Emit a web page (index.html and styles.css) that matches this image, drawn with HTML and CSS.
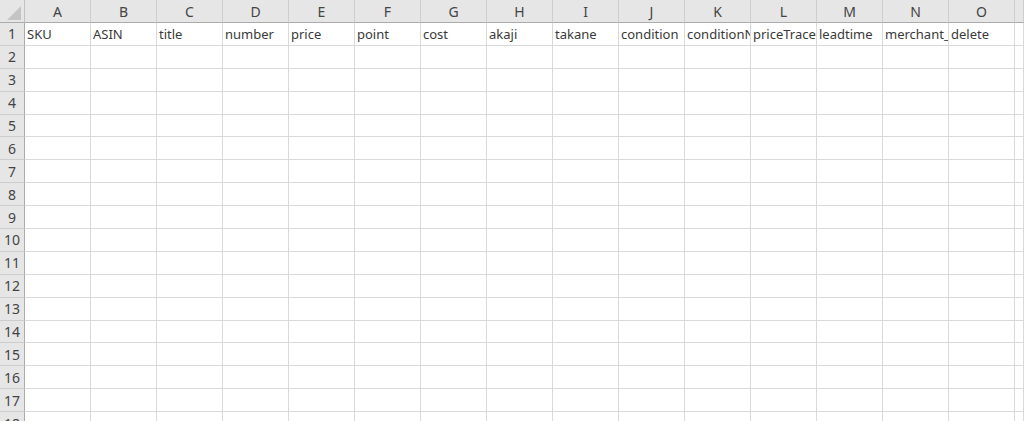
FILE: index.html
```html
<!DOCTYPE html>
<html lang="ja">
<head>
<meta charset="utf-8">
<title>Sheet</title>
<link rel="stylesheet" href="styles.css">
</head>
<body>
<div class="sheet">
  <div class="row head">
    <div class="corner"><svg class="tri" width="14" height="14" viewBox="0 0 14 14"><polygon points="14,0 14,14 0,14" fill="#c4c4c4"/></svg></div>
    <div class="ch">A</div><div class="ch">B</div><div class="ch">C</div><div class="ch">D</div><div class="ch">E</div><div class="ch">F</div><div class="ch">G</div><div class="ch">H</div><div class="ch">I</div><div class="ch">J</div><div class="ch">K</div><div class="ch">L</div><div class="ch">M</div><div class="ch">N</div><div class="ch">O</div><div class="ch"></div>
  </div>
  <div class="row">
    <div class="rh">1</div>
    <div class="c">SKU</div><div class="c">ASIN</div><div class="c">title</div><div class="c">number</div><div class="c">price</div><div class="c">point</div><div class="c">cost</div><div class="c">akaji</div><div class="c">takane</div><div class="c">condition</div><div class="c">conditionNote</div><div class="c">priceTrace</div><div class="c">leadtime</div><div class="c">merchant_shipping_group_name</div><div class="c">delete</div><div class="c"></div>
  </div>
  <div class="row"><div class="rh">2</div><div class="c"></div><div class="c"></div><div class="c"></div><div class="c"></div><div class="c"></div><div class="c"></div><div class="c"></div><div class="c"></div><div class="c"></div><div class="c"></div><div class="c"></div><div class="c"></div><div class="c"></div><div class="c"></div><div class="c"></div><div class="c"></div></div>
  <div class="row"><div class="rh">3</div><div class="c"></div><div class="c"></div><div class="c"></div><div class="c"></div><div class="c"></div><div class="c"></div><div class="c"></div><div class="c"></div><div class="c"></div><div class="c"></div><div class="c"></div><div class="c"></div><div class="c"></div><div class="c"></div><div class="c"></div><div class="c"></div></div>
  <div class="row"><div class="rh">4</div><div class="c"></div><div class="c"></div><div class="c"></div><div class="c"></div><div class="c"></div><div class="c"></div><div class="c"></div><div class="c"></div><div class="c"></div><div class="c"></div><div class="c"></div><div class="c"></div><div class="c"></div><div class="c"></div><div class="c"></div><div class="c"></div></div>
  <div class="row"><div class="rh">5</div><div class="c"></div><div class="c"></div><div class="c"></div><div class="c"></div><div class="c"></div><div class="c"></div><div class="c"></div><div class="c"></div><div class="c"></div><div class="c"></div><div class="c"></div><div class="c"></div><div class="c"></div><div class="c"></div><div class="c"></div><div class="c"></div></div>
  <div class="row"><div class="rh">6</div><div class="c"></div><div class="c"></div><div class="c"></div><div class="c"></div><div class="c"></div><div class="c"></div><div class="c"></div><div class="c"></div><div class="c"></div><div class="c"></div><div class="c"></div><div class="c"></div><div class="c"></div><div class="c"></div><div class="c"></div><div class="c"></div></div>
  <div class="row"><div class="rh">7</div><div class="c"></div><div class="c"></div><div class="c"></div><div class="c"></div><div class="c"></div><div class="c"></div><div class="c"></div><div class="c"></div><div class="c"></div><div class="c"></div><div class="c"></div><div class="c"></div><div class="c"></div><div class="c"></div><div class="c"></div><div class="c"></div></div>
  <div class="row"><div class="rh">8</div><div class="c"></div><div class="c"></div><div class="c"></div><div class="c"></div><div class="c"></div><div class="c"></div><div class="c"></div><div class="c"></div><div class="c"></div><div class="c"></div><div class="c"></div><div class="c"></div><div class="c"></div><div class="c"></div><div class="c"></div><div class="c"></div></div>
  <div class="row"><div class="rh">9</div><div class="c"></div><div class="c"></div><div class="c"></div><div class="c"></div><div class="c"></div><div class="c"></div><div class="c"></div><div class="c"></div><div class="c"></div><div class="c"></div><div class="c"></div><div class="c"></div><div class="c"></div><div class="c"></div><div class="c"></div><div class="c"></div></div>
  <div class="row"><div class="rh">10</div><div class="c"></div><div class="c"></div><div class="c"></div><div class="c"></div><div class="c"></div><div class="c"></div><div class="c"></div><div class="c"></div><div class="c"></div><div class="c"></div><div class="c"></div><div class="c"></div><div class="c"></div><div class="c"></div><div class="c"></div><div class="c"></div></div>
  <div class="row"><div class="rh">11</div><div class="c"></div><div class="c"></div><div class="c"></div><div class="c"></div><div class="c"></div><div class="c"></div><div class="c"></div><div class="c"></div><div class="c"></div><div class="c"></div><div class="c"></div><div class="c"></div><div class="c"></div><div class="c"></div><div class="c"></div><div class="c"></div></div>
  <div class="row"><div class="rh">12</div><div class="c"></div><div class="c"></div><div class="c"></div><div class="c"></div><div class="c"></div><div class="c"></div><div class="c"></div><div class="c"></div><div class="c"></div><div class="c"></div><div class="c"></div><div class="c"></div><div class="c"></div><div class="c"></div><div class="c"></div><div class="c"></div></div>
  <div class="row"><div class="rh">13</div><div class="c"></div><div class="c"></div><div class="c"></div><div class="c"></div><div class="c"></div><div class="c"></div><div class="c"></div><div class="c"></div><div class="c"></div><div class="c"></div><div class="c"></div><div class="c"></div><div class="c"></div><div class="c"></div><div class="c"></div><div class="c"></div></div>
  <div class="row"><div class="rh">14</div><div class="c"></div><div class="c"></div><div class="c"></div><div class="c"></div><div class="c"></div><div class="c"></div><div class="c"></div><div class="c"></div><div class="c"></div><div class="c"></div><div class="c"></div><div class="c"></div><div class="c"></div><div class="c"></div><div class="c"></div><div class="c"></div></div>
  <div class="row"><div class="rh">15</div><div class="c"></div><div class="c"></div><div class="c"></div><div class="c"></div><div class="c"></div><div class="c"></div><div class="c"></div><div class="c"></div><div class="c"></div><div class="c"></div><div class="c"></div><div class="c"></div><div class="c"></div><div class="c"></div><div class="c"></div><div class="c"></div></div>
  <div class="row"><div class="rh">16</div><div class="c"></div><div class="c"></div><div class="c"></div><div class="c"></div><div class="c"></div><div class="c"></div><div class="c"></div><div class="c"></div><div class="c"></div><div class="c"></div><div class="c"></div><div class="c"></div><div class="c"></div><div class="c"></div><div class="c"></div><div class="c"></div></div>
  <div class="row"><div class="rh">17</div><div class="c"></div><div class="c"></div><div class="c"></div><div class="c"></div><div class="c"></div><div class="c"></div><div class="c"></div><div class="c"></div><div class="c"></div><div class="c"></div><div class="c"></div><div class="c"></div><div class="c"></div><div class="c"></div><div class="c"></div><div class="c"></div></div>
  <div class="row"><div class="rh">18</div><div class="c"></div><div class="c"></div><div class="c"></div><div class="c"></div><div class="c"></div><div class="c"></div><div class="c"></div><div class="c"></div><div class="c"></div><div class="c"></div><div class="c"></div><div class="c"></div><div class="c"></div><div class="c"></div><div class="c"></div><div class="c"></div></div>
</div>
</body>
</html>
```

FILE: styles.css
```css
html, body {
  margin: 0;
  padding: 0;
  background: #ffffff;
  overflow: hidden;
}

.sheet {
  display: flex;
  flex-direction: column;
  width: 1024px;
  height: 421px;
  overflow: hidden;
  font-family: "Noto Sans", "Liberation Sans", sans-serif;
  font-size: 13px;
  color: #3a3a3a;
}

.row {
  display: grid;
  grid-template-columns: 25px repeat(15, 66px) 9px;
  height: 22.9px;
  flex: none;
}

.row.head {
  height: 23px;
  background: #e6e6e6;
}

.corner {
  box-sizing: border-box;
  border-right: 1px solid #c0c0c0;
  border-bottom: 1px solid #ababab;
  display: flex;
  align-items: flex-end;
  justify-content: flex-end;
  padding: 0 3px 2px 0;
}

.tri {
  display: block;
}

.ch {
  box-sizing: border-box;
  border-right: 1px solid #cdcdcd;
  border-bottom: 1px solid #ababab;
  display: flex;
  align-items: center;
  justify-content: center;
  color: #444444;
  font-size: 14px;
}

.rh {
  box-sizing: border-box;
  background: #e6e6e6;
  border-right: 1px solid #ababab;
  border-bottom: 1px solid #cdcdcd;
  display: flex;
  align-items: center;
  justify-content: center;
  color: #444444;
  font-size: 14px;
}

.c {
  box-sizing: border-box;
  border-right: 1px solid #d9d9d9;
  border-bottom: 1px solid #d9d9d9;
  display: flex;
  align-items: center;
  padding-left: 2px;
  white-space: nowrap;
  overflow: hidden;
}
```
